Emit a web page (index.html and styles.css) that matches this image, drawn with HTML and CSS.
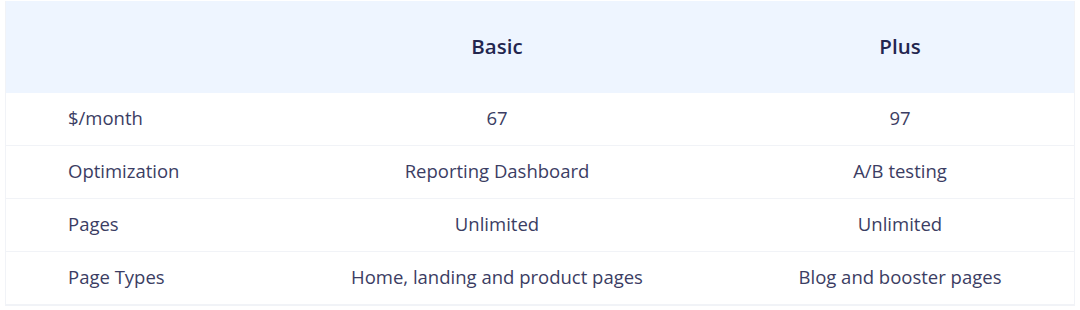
FILE: index.html
```html
<!DOCTYPE html>
<html lang="en">
<head>
<meta charset="utf-8">
<title>Plans</title>
<link rel="stylesheet" href="styles.css">
</head>
<body>
<div class="table">
  <div class="row head">
    <div class="cell label"></div>
    <div class="cell">Basic</div>
    <div class="cell">Plus</div>
  </div>
  <div class="row">
    <div class="cell label">$/month</div>
    <div class="cell">67</div>
    <div class="cell">97</div>
  </div>
  <div class="row">
    <div class="cell label">Optimization</div>
    <div class="cell">Reporting Dashboard</div>
    <div class="cell">A/B testing</div>
  </div>
  <div class="row">
    <div class="cell label">Pages</div>
    <div class="cell">Unlimited</div>
    <div class="cell">Unlimited</div>
  </div>
  <div class="row">
    <div class="cell label">Page Types</div>
    <div class="cell">Home, landing and product pages</div>
    <div class="cell">Blog and booster pages</div>
  </div>
</div>
</body>
</html>
```

FILE: styles.css
```css
html, body {
  margin: 0;
  padding: 0;
  background: #ffffff;
}
body {
  padding: 1px 5px 0 5px;
  font-family: "Open Sans", "Liberation Sans", sans-serif;
  color: #3b3d63;
}
.table {
  width: 1070px;
  border: 1px solid #f1f3f7;
  border-top: none;
  box-sizing: border-box;
}
.row {
  display: grid;
  grid-template-columns: 263px 456px 350px;
  height: 53px;
  align-items: center;
  border-bottom: 1px solid #f1f3f7;
  box-sizing: border-box;
  font-size: 18.5px;
  padding-bottom: 3px;
}
.head {
  height: 92px;
  background: #eef5ff;
  border-bottom: none;
  font-weight: 600;
  font-size: 20.5px;
  color: #23264f;
  padding-bottom: 2px;
}
.cell {
  text-align: center;
}
.cell.label {
  text-align: left;
  padding-left: 62px;
}
```
